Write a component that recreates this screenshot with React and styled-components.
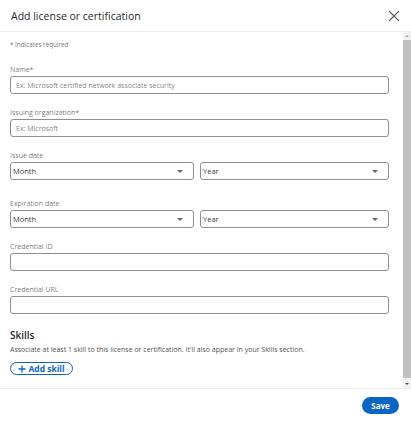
import React from "react";
import styled, { createGlobalStyle } from "styled-components";

const GlobalStyle = createGlobalStyle`
  html, body {
    margin: 0;
    padding: 0;
    background: #ffffff;
    font-family: "Open Sans", "Noto Sans", sans-serif;
  }
`;

const Modal = styled.div`
  width: 411px;
  height: 421px;
  display: flex;
  flex-direction: column;
  background: #fff;
  overflow: hidden;
`;

const Header = styled.div`
  height: 32px;
  flex: none;
  display: flex;
  align-items: center;
  justify-content: space-between;
  padding: 0 11px 0 11px;
  box-sizing: border-box;
  border-bottom: 1px solid #ececec;
`;

const Title = styled.h2`
  margin: 0;
  font-size: 10.5px;
  font-weight: 400;
  color: rgba(0, 0, 0, 0.9);
  line-height: 14px;
`;

const CloseBtn = styled.button`
  border: 0;
  background: none;
  padding: 0;
  width: 12px;
  height: 12px;
  display: flex;
  cursor: pointer;
`;

const Body = styled.div`
  flex: 1;
  min-height: 0;
  display: flex;
`;

const Content = styled.div`
  flex: 1;
  overflow: hidden;
  padding: 8px 14px 14px 10px;
  display: flex;
  flex-direction: column;
`;

/* the page scrollbar, drawn since the screenshot browser hides its own */
const ScrollBar = styled.div`
  width: 8px;
  flex: none;
  display: flex;
  flex-direction: column;
  background: #f1f1f1;
`;

const ScrollArrow = styled.div`
  height: 8px;
  flex: none;
  display: flex;
  align-items: center;
  justify-content: center;
  &::after {
    content: "";
    width: 0;
    height: 0;
    border-left: 2px solid transparent;
    border-right: 2px solid transparent;
    ${(p) =>
      p.$up
        ? "border-bottom: 2px solid #a3a3a3;"
        : "border-top: 2px solid #505050;"}
  }
`;

const Thumb = styled.div`
  flex: 1;
  background: #c1c1c1;
  margin-bottom: 2px;
`;

const Required = styled.div`
  font-size: 6.3px;
  line-height: 10px;
  color: rgba(0, 0, 0, 0.6);
  margin-bottom: 15px;
`;

const Fields = styled.div`
  display: flex;
  flex-direction: column;
  gap: 14px;
`;

const Field = styled.div`
  display: flex;
  flex-direction: column;
  gap: 1px;
  margin-top: ${(p) => (p.$extra ? `${p.$extra}px` : "0")};
`;

const Label = styled.label`
  font-size: 7px;
  line-height: 10px;
  color: rgba(0, 0, 0, 0.58);
`;

const Input = styled.input`
  box-sizing: border-box;
  height: 18px;
  width: 100%;
  margin: 0;
  border: 1px solid #8f8f8f;
  border-radius: 3px;
  padding: 0 5px;
  font-family: "Open Sans", sans-serif;
  font-size: 7px;
  color: rgba(0, 0, 0, 0.9);
  outline: none;
  &::placeholder {
    color: rgba(0, 0, 0, 0.55);
  }
`;

const Row = styled.div`
  display: grid;
  grid-template-columns: 184px 1fr;
  gap: 6px;
`;

const Select = styled.div`
  box-sizing: border-box;
  height: 18px;
  border: 1px solid #8f8f8f;
  border-radius: 3px;
  padding: 0 10px 0 2px;
  display: flex;
  align-items: center;
  justify-content: space-between;
  font-size: 7.5px;
  color: rgba(0, 0, 0, 0.85);
`;

const Caret = styled.span`
  width: 0;
  height: 0;
  border-left: 3px solid transparent;
  border-right: 3px solid transparent;
  border-top: 3px solid #666;
`;

const SkillsTitle = styled.h3`
  margin: 14px 0 3px;
  font-size: 10px;
  line-height: 14px;
  font-weight: 600;
  color: rgba(0, 0, 0, 0.9);
`;

const Desc = styled.p`
  margin: 0 0 7px;
  font-size: 7px;
  line-height: 10px;
  color: rgba(0, 0, 0, 0.75);
`;

const OutlineBtn = styled.button`
  align-self: flex-start;
  box-sizing: border-box;
  height: 17px;
  width: 63px;
  border: 1px solid #0a66c2;
  border-radius: 9px;
  background: #fff;
  color: #0a66c2;
  font-family: "Open Sans", sans-serif;
  font-size: 8.5px;
  font-weight: 700;
  display: flex;
  align-items: center;
  justify-content: center;
  gap: 2px;
  padding: 0;
`;

const Footer = styled.div`
  height: 33px;
  flex: none;
  border-top: 1px solid #ececec;
  box-sizing: border-box;
  display: flex;
  align-items: center;
  justify-content: flex-end;
  padding-right: 12px;
`;

const PrimaryBtn = styled.button`
  height: 17px;
  width: 37px;
  border: 0;
  border-radius: 9px;
  background: #0a66c2;
  color: #fff;
  font-family: "Open Sans", sans-serif;
  font-size: 8px;
  font-weight: 700;
  padding: 0;
`;

const SelectBox = ({ text }) => (
  <Select>
    <span>{text}</span>
    <Caret />
  </Select>
);

export default function App() {
  return (
    <>
      <GlobalStyle />
      <Modal>
        <Header>
          <Title>Add license or certification</Title>
          <CloseBtn aria-label="Dismiss">
            <svg width="12" height="12" viewBox="0 0 12 12">
              <path d="M1 1 L11 11 M11 1 L1 11" stroke="#5e5e5e" strokeWidth="1.1" fill="none" />
            </svg>
          </CloseBtn>
        </Header>
        <Body>
          <Content>
            <Required>* Indicates required</Required>
            <Fields>
              <Field>
                <Label>Name*</Label>
                <Input placeholder="Ex: Microsoft certified network associate security" />
              </Field>
              <Field>
                <Label>Issuing organization*</Label>
                <Input placeholder="Ex: Microsoft" />
              </Field>
              <Field>
                <Label>Issue date</Label>
                <Row>
                  <SelectBox text="Month" />
                  <SelectBox text="Year" />
                </Row>
              </Field>
              <Field $extra={5}>
                <Label>Expiration date</Label>
                <Row>
                  <SelectBox text="Month" />
                  <SelectBox text="Year" />
                </Row>
              </Field>
              <Field>
                <Label>Credential ID</Label>
                <Input />
              </Field>
              <Field>
                <Label>Credential URL</Label>
                <Input />
              </Field>
            </Fields>
            <SkillsTitle>Skills</SkillsTitle>
            <Desc>
              Associate at least 1 skill to this license or certification. It'll also appear in your Skills section.
            </Desc>
            <OutlineBtn>
              <svg width="8" height="8" viewBox="0 0 8 8">
                <path d="M4 0.5 V7.5 M0.5 4 H7.5" stroke="#0a66c2" strokeWidth="1.3" />
              </svg>
              Add skill
            </OutlineBtn>
          </Content>
          <ScrollBar>
            <ScrollArrow $up />
            <Thumb />
            <ScrollArrow />
          </ScrollBar>
        </Body>
        <Footer>
          <PrimaryBtn>Save</PrimaryBtn>
        </Footer>
      </Modal>
    </>
  );
}
